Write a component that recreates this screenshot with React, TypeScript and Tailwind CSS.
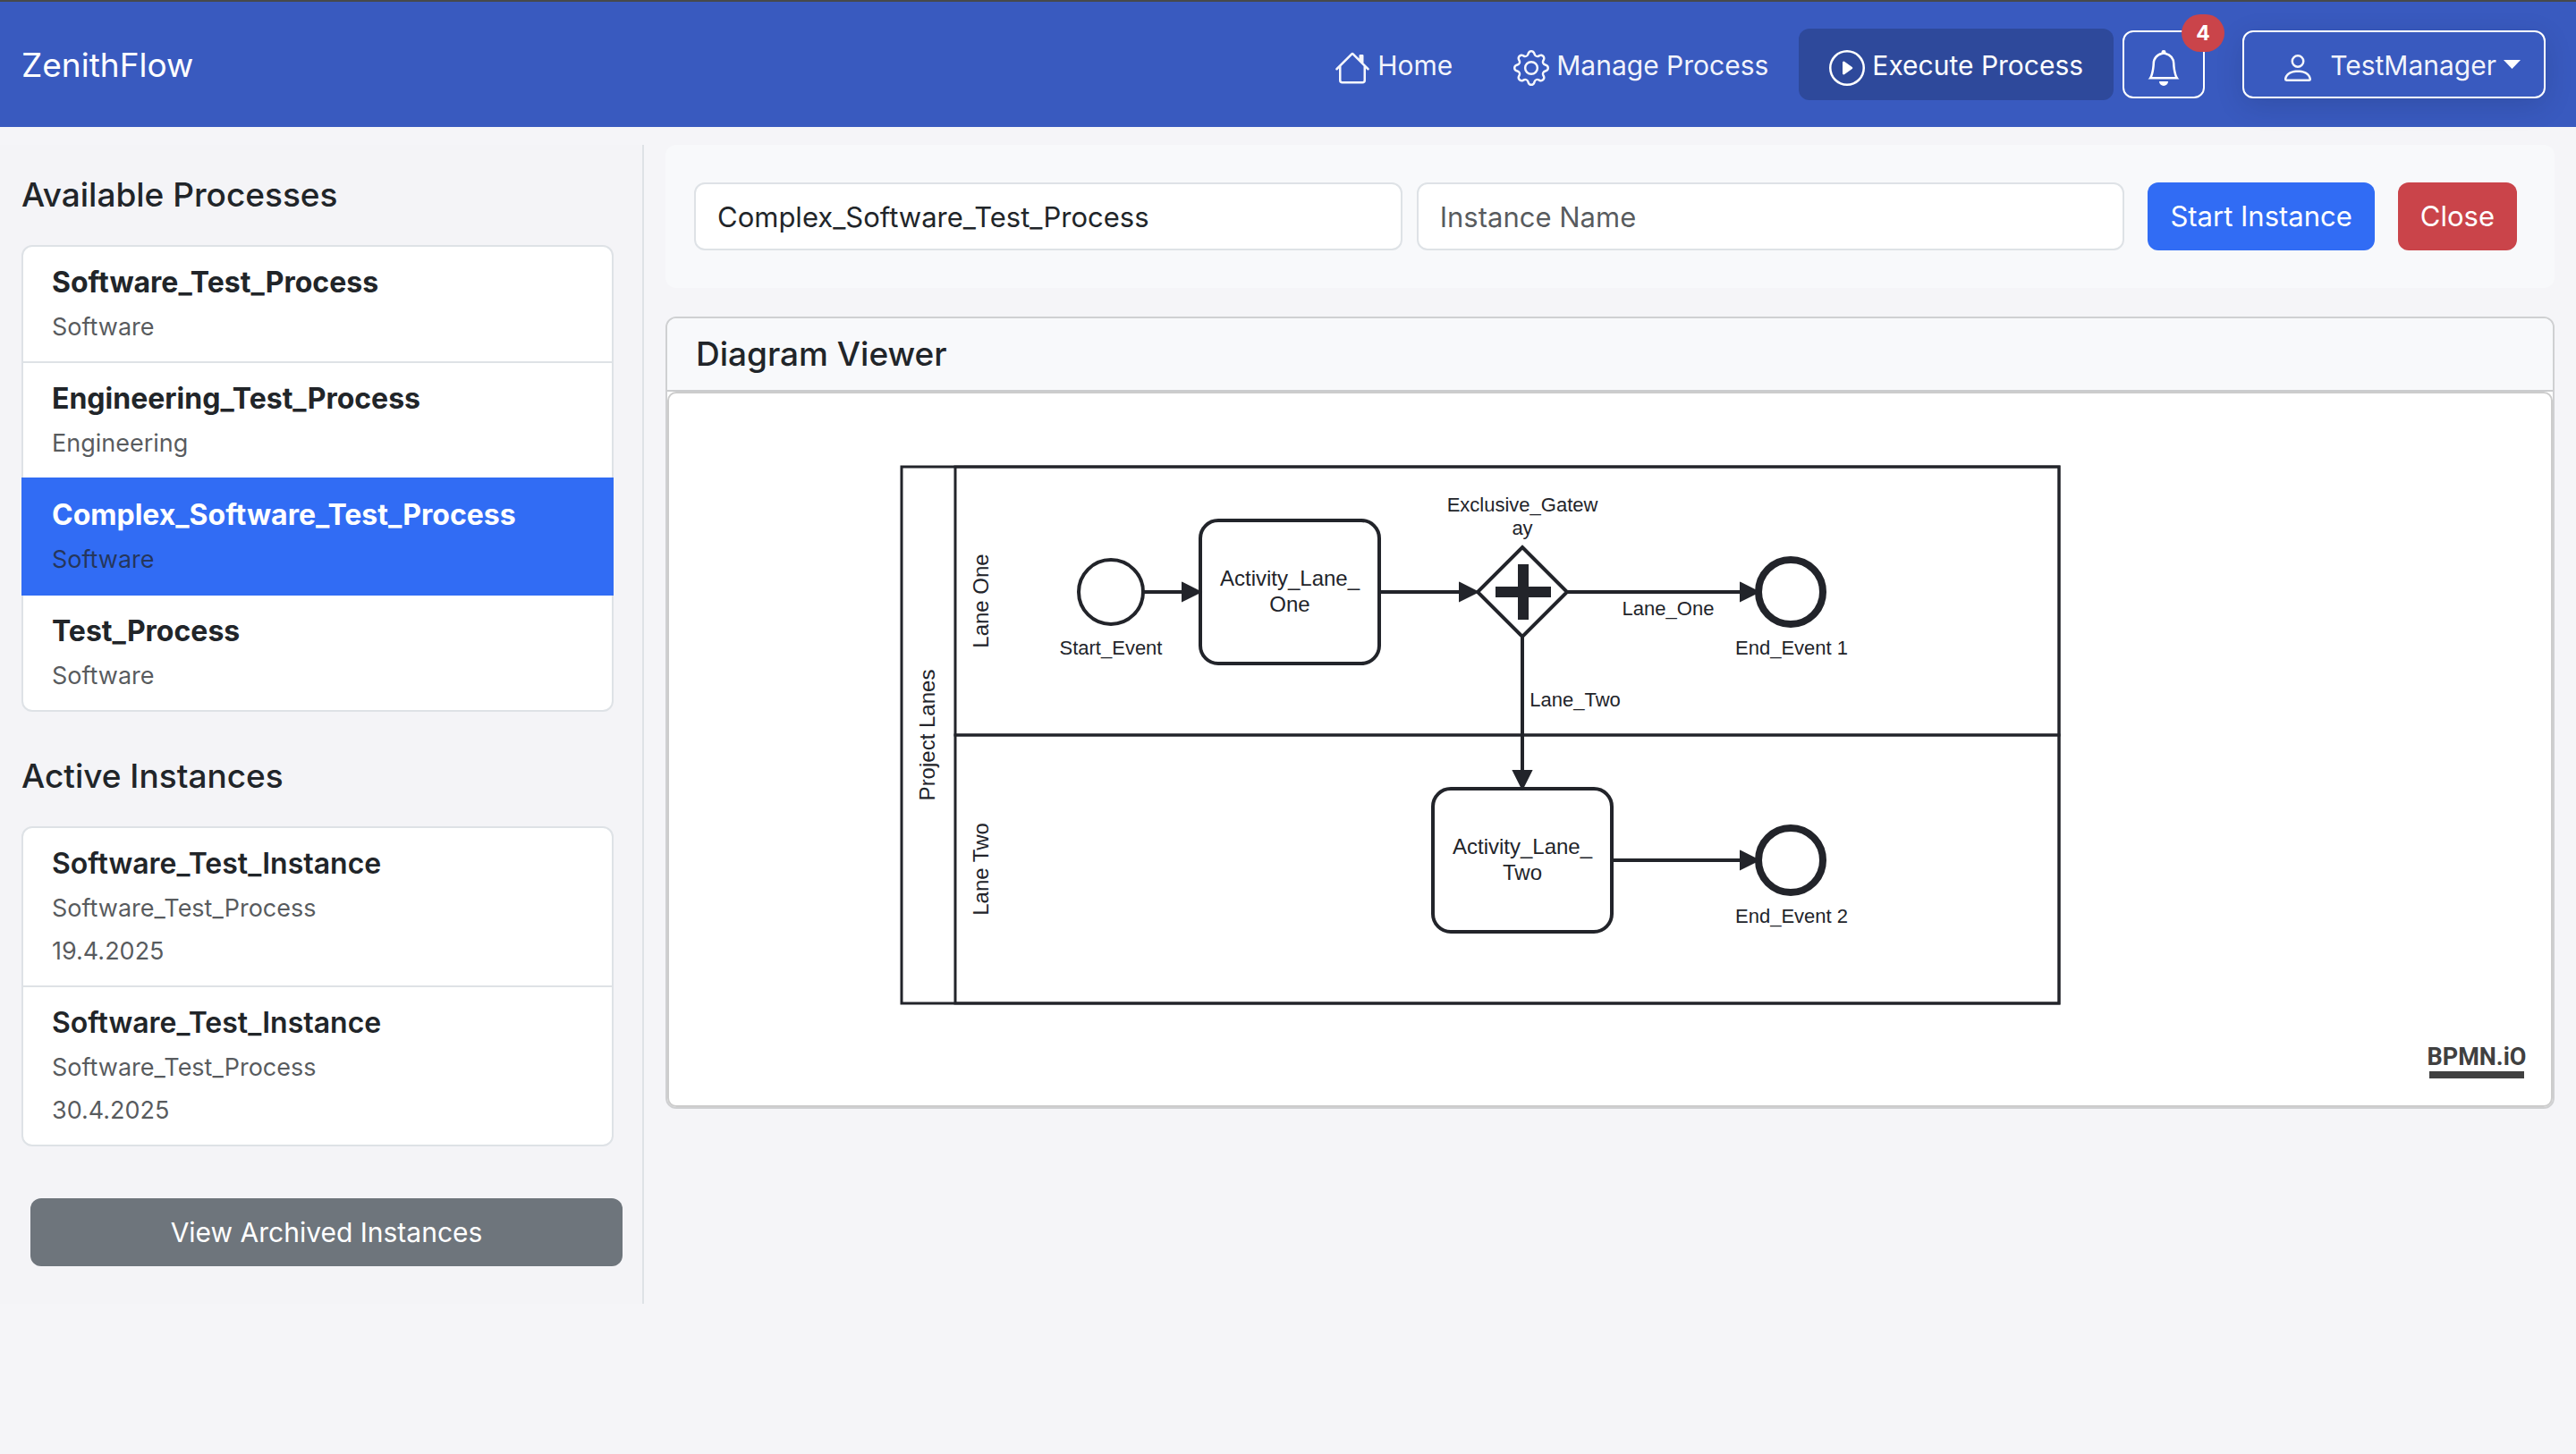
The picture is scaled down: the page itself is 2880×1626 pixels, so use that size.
import type { ReactNode } from "react";
import { BsBell, BsGear, BsHouse, BsPerson, BsPlayCircle } from "react-icons/bs";

const processes = [
  { name: "Software_Test_Process", kind: "Software", active: false },
  { name: "Engineering_Test_Process", kind: "Engineering", active: false },
  { name: "Complex_Software_Test_Process", kind: "Software", active: true },
  { name: "Test_Process", kind: "Software", active: false },
];

const instances = [
  { name: "Software_Test_Instance", process: "Software_Test_Process", date: "19.4.2025" },
  { name: "Software_Test_Instance", process: "Software_Test_Process", date: "30.4.2025" },
];

function NavLink({ icon, label, active = false }: { icon: ReactNode; label: string; active?: boolean }) {
  return (
    <a
      href="#"
      aria-current={active ? "page" : undefined}
      className={
        active
          ? "flex h-20 items-center gap-2 rounded-xl bg-[#2e499b] px-[34px] text-white"
          : "flex h-20 items-center gap-2 rounded-xl px-[34px] text-white/95"
      }
    >
      {icon}
      <span className="pt-0.5">{label}</span>
    </a>
  );
}

function Header() {
  return (
    <header className="flex items-center justify-between border-t-2 border-[#47494b] bg-[#395abf] py-[30px] pr-[34px] pl-6 text-[30px] leading-[48px]">
      <a href="#" className="pt-0.5 text-[37px] text-white">
        ZenithFlow
      </a>
      <nav className="flex items-center">
        <NavLink icon={<BsHouse className="mt-2 size-10" />} label="Home" />
        <NavLink icon={<BsGear className="mt-2 size-10" />} label="Manage Process" />
        <NavLink icon={<BsPlayCircle className="mt-2 size-10" />} label="Execute Process" active />
        <button
          type="button"
          aria-label="Notifications"
          className="relative ml-[10px] flex h-[76px] items-center rounded-xl border-2 border-white px-6 text-white"
        >
          <BsBell className="mt-2 size-10" />
          <span className="absolute -top-5 -right-6 flex h-[42px] w-12 items-center justify-center rounded-full bg-[#ca444a] text-[23px] leading-6 font-bold">
            4
          </span>
        </button>
        <button
          type="button"
          className="ml-[42px] flex h-[76px] items-center rounded-xl border-2 border-white pr-[26px] pl-10 text-white/95 shadow-[0_8px_32px_rgba(0,0,0,0.12)]"
        >
          <BsPerson className="mt-2 mr-4 size-10" />
          <span className="pt-0.5">TestManager</span>
          <svg className="ml-2 h-[10px] w-[19px]" viewBox="0 0 19 10" aria-hidden="true">
            <path d="M0 0H19L9.5 10Z" fill="#fff" />
          </svg>
        </button>
      </nav>
    </header>
  );
}

function Detail({ children }: { children: ReactNode }) {
  return (
    <span className="block h-12 text-[32px]">
      <span className="text-[27px] text-[#212529]/75">{children}</span>
    </span>
  );
}

function Sidebar() {
  return (
    <aside className="w-1/4 border-r-2 border-[#dee2e6] bg-[#f4f4f7] pt-8 pb-[42px] pl-6">
      <h2 className="mb-8 text-[37px] leading-[48px] font-medium">Available Processes</h2>
      <ul className="mr-8 rounded-xl border-2 border-[#dee2e6] bg-white leading-[48px]">
        {processes.map((p) => (
          <li
            key={p.name}
            className={
              p.active
                ? "-mx-[2px] -mt-[2px] border-2 border-[#316cf4] bg-[#316cf4] text-white"
                : "border-b-2 border-[#dee2e6] last:border-b-0"
            }
          >
            <button type="button" className="block w-full px-8 py-4 text-left">
              <span className="block text-[32px] font-bold">{p.name}</span>
              <Detail>{p.kind}</Detail>
            </button>
          </li>
        ))}
      </ul>
      <h2 className="mt-12 mb-8 text-[37px] leading-[48px] font-medium">Active Instances</h2>
      <ul className="mr-8 rounded-xl border-2 border-[#dee2e6] bg-white leading-[48px]">
        {instances.map((i) => (
          <li key={i.date} className="border-b-2 border-[#dee2e6] last:border-b-0">
            <button type="button" className="block w-full px-8 py-4 text-left">
              <span className="block text-[32px] font-semibold">{i.name}</span>
              <Detail>{i.process}</Detail>
              <Detail>{i.date}</Detail>
            </button>
          </li>
        ))}
      </ul>
      <div className="mt-[58px] pr-[22px] pl-[10px]">
        <button type="button" className="h-[76px] w-full rounded-xl bg-[#6e757c] text-[30px] text-white">
          View Archived Instances
        </button>
      </div>
    </aside>
  );
}

function Flow({ d, tip, down = false }: { d: string; tip: [number, number]; down?: boolean }) {
  const [x, y] = tip;
  const head = down
    ? `M${x - 10} ${y - 20}L${x} ${y}L${x + 10} ${y - 20}Z`
    : `M${x - 20} ${y - 10}L${x} ${y}L${x - 20} ${y + 10}Z`;
  return (
    <g stroke="#22242a">
      <path d={d} fill="none" strokeWidth="4" />
      <path d={head} fill="#22242a" strokeWidth="2" />
    </g>
  );
}

function Diagram() {
  return (
    <svg
      viewBox="748 440 2104 796"
      preserveAspectRatio="xMinYMin meet"
      className="block h-[796px] w-full font-['Liberation_Sans',Arial,sans-serif]"
      role="img"
      aria-label="Process diagram"
    >
      <g fill="none" stroke="#22242a" strokeWidth="3">
        <path d="M1008 522H2302V1122H1008Z" />
        <path d="M1068 522H2302V822H1068Z" />
        <path d="M1068 822H2302V1122H1068Z" />
      </g>
      <g fill="#fff" stroke="#22242a" strokeWidth="4">
        <circle cx="1242" cy="662" r="36" />
        <rect x="1342" y="582" width="200" height="160" rx="20" />
        <rect x="1602" y="882" width="200" height="160" rx="20" />
        <path d="M1702 612L1752 662L1702 712L1652 662Z" />
        <circle cx="2002" cy="662" r="36" strokeWidth="8" />
        <circle cx="2002" cy="962" r="36" strokeWidth="8" />
      </g>
      <path
        d="M1698 632v25h-25v10h25v25h10v-25h25v-10h-25v-25z"
        fill="#22242a"
        stroke="#22242a"
        strokeWidth="2"
      />
      <Flow d="M1278 662H1335" tip={[1342, 662]} />
      <Flow d="M1542 662H1645" tip={[1652, 662]} />
      <Flow d="M1752 662H1960" tip={[1966, 662]} />
      <Flow d="M1702 712V875" tip={[1702, 882]} down />
      <Flow d="M1802 962H1960" tip={[1966, 962]} />
      <g fill="#22242a" fontSize="24" textAnchor="middle">
        <text transform="translate(1045 822) rotate(-90)">Project Lanes</text>
        <text transform="translate(1105 672) rotate(-90)">Lane One</text>
        <text transform="translate(1105 972) rotate(-90)">Lane Two</text>
        <text x="1442" y="655">Activity_Lane_</text>
        <text x="1442" y="684">One</text>
        <text x="1702" y="955">Activity_Lane_</text>
        <text x="1702" y="984">Two</text>
      </g>
      <g fill="#22242a" fontSize="22" textAnchor="middle">
        <text x="1242" y="732">Start_Event</text>
        <text x="1702" y="572">Exclusive_Gatew</text>
        <text x="1702" y="598">ay</text>
        <text x="1865" y="688">Lane_One</text>
        <text x="1761" y="790">Lane_Two</text>
        <text x="2003" y="732">End_Event 1</text>
        <text x="2003" y="1032">End_Event 2</text>
      </g>
    </svg>
  );
}

function Main() {
  return (
    <main className="flex min-w-0 flex-1 flex-col gap-8 px-6 text-[31px] leading-[48px]">
      <form className="flex items-center rounded-xl bg-[#f8f9fb] py-[42px] pr-[42px] pl-8">
        <input
          aria-label="Process"
          readOnly
          value="Complex_Software_Test_Process"
          className="h-[76px] min-w-0 flex-1 rounded-xl border-2 border-[#dee2e6] bg-white px-6"
        />
        <input
          aria-label="Instance name"
          placeholder="Instance Name"
          className="ml-4 h-[76px] min-w-0 flex-1 rounded-xl border-2 border-[#dee2e6] bg-white px-6 placeholder:text-[#212529]/75"
        />
        <button type="button" className="ml-[26px] h-[76px] rounded-xl bg-[#316cf4] px-[25px] text-white">
          Start Instance
        </button>
        <button type="button" className="ml-[26px] h-[76px] rounded-xl bg-[#ca444a] px-[25px] text-white">
          Close
        </button>
      </form>
      <section className="rounded-xl border-2 border-[#cfd0d2] bg-white">
        <h2 className="rounded-t-[10px] border-b-2 border-[#cbccce] bg-[#f8f9fb] px-8 py-4 text-[37px] leading-[48px] font-medium">
          Diagram Viewer
        </h2>
        <div className="relative rounded-[10px] border-2 border-[#cccccc]">
          <Diagram />
          <a
            href="#"
            className="absolute right-[30px] bottom-[30px] flex w-[106px] justify-center border-b-8 border-[#404040] font-[Roboto,sans-serif] text-[27px] leading-8 font-bold text-[#404040]"
          >
            BPMN.iO
          </a>
        </div>
      </section>
    </main>
  );
}

export default function App() {
  return (
    <div className="min-h-screen bg-[#f5f5f8] font-[Inter,sans-serif] text-[#212529]">
      <Header />
      <div className="flex items-start pt-5">
        <Sidebar />
        <Main />
      </div>
    </div>
  );
}
